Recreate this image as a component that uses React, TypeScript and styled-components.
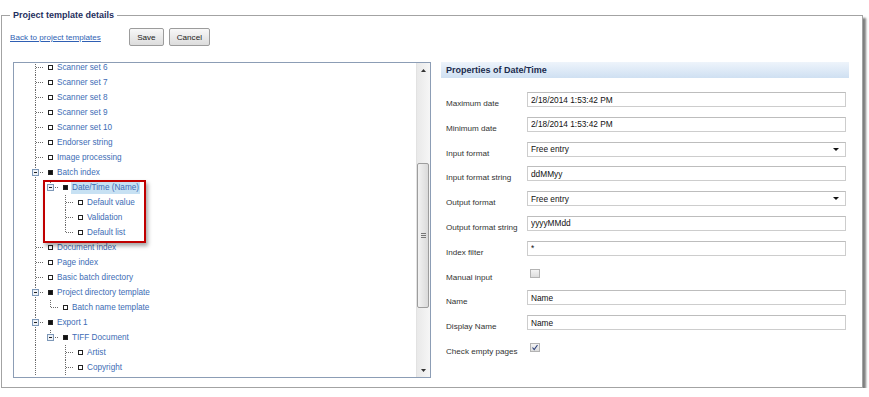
import { Fragment } from "react";
import styled, { createGlobalStyle } from "styled-components";

const GlobalStyle = createGlobalStyle`
  html, body {
    margin: 0;
    padding: 0;
    background: #fff;
  }
  body {
    font-family: "Liberation Sans", Arial, sans-serif;
    font-size: 8.1px;
    color: #333;
  }
`;

const Frame = styled.fieldset`
  box-sizing: border-box;
  width: 862px;
  margin: 9px 0 0 1px;
  padding: 7px 0 9px 8px;
  border: 1px solid #a3a3a3;
  box-shadow: 3px 3px 2px rgba(0, 0, 0, 0.5);
  min-width: 0;
`;

const Legend = styled.legend`
  padding: 0 3px;
  font-size: 9px;
  line-height: 12px;
  font-weight: bold;
  color: #1f2f5e;
`;

const Toolbar = styled.div`
  display: flex;
  align-items: center;
  height: 18px;
`;

const BackLink = styled.a`
  color: #2f5fb3;
  text-decoration: underline;
  font-size: 8.1px;
  margin-right: 28px;
  cursor: pointer;
`;

const Button = styled.button<{ $w: number }>`
  box-sizing: border-box;
  width: ${(p) => p.$w}px;
  height: 18px;
  padding: 0;
  margin-right: 5px;
  font-family: "Liberation Sans", Arial, sans-serif;
  font-size: 8.1px;
  color: #222;
  border: 1px solid #9c9c9c;
  border-radius: 2px;
  background: linear-gradient(#f8f8f8, #dcdcdc);
`;

const Panels = styled.div`
  display: flex;
  align-items: flex-start;
  margin: 16px 0 0 3px;
`;

const TreeBox = styled.div`
  position: relative;
  box-sizing: border-box;
  width: 418px;
  height: 316px;
  border: 1px solid #8c9db5;
  display: flex;
`;

const TreeScroll = styled.div`
  flex: 1;
  overflow: hidden;
  padding-left: 14px;
`;

const TreeList = styled.div`
  margin-top: -3px;
`;

const Row = styled.div`
  display: flex;
  align-items: center;
  height: 15px;
`;

const NodeIcon = styled.span<{ $filled: boolean }>`
  box-sizing: border-box;
  width: 5px;
  height: 5px;
  margin: 0 4px 0 5px;
  border: 1px solid #222;
  background: ${(p) => (p.$filled ? "#111" : "#fff")};
`;

const NodeText = styled.span<{ $selected?: boolean }>`
  color: #3d6cb5;
  font-size: 8.2px;
  line-height: 13px;
  white-space: nowrap;
  padding: 0 1px;
  margin-left: -1px;
  background: ${(p) => (p.$selected ? "#c7e1f3" : "transparent")};
`;

const Callout = styled.div`
  position: absolute;
  left: 29px;
  top: 117px;
  width: 103px;
  height: 63px;
  box-sizing: border-box;
  border: 2px solid #c00000;
  box-shadow: 2px 3px 4px rgba(0, 0, 0, 0.35);
  pointer-events: none;
`;

const Scrollbar = styled.div`
  width: 13px;
  display: flex;
  flex-direction: column;
  background: linear-gradient(90deg, #e9e9e9, #f6f6f6);
  border-left: 1px solid #e2e2e2;
`;

const ArrowButton = styled.div`
  height: 14px;
  display: flex;
  align-items: center;
  justify-content: center;
`;

const Track = styled.div<{ $h?: number }>`
  height: ${(p) => (p.$h ? `${p.$h}px` : "auto")};
  flex: ${(p) => (p.$h ? "none" : "1")};
`;

const Thumb = styled.div`
  box-sizing: border-box;
  height: 145px;
  margin: 0 1px 0 0;
  border: 1px solid #9d9d9d;
  border-radius: 2px;
  background: linear-gradient(90deg, #f2f2f2, #dadada);
  display: flex;
  align-items: center;
  justify-content: center;
`;

const Grip = styled.div`
  width: 5px;
  height: 5px;
  background: repeating-linear-gradient(#777 0 1px, transparent 1px 2px);
`;

const PropsPanel = styled.div`
  width: 408px;
  margin-left: 10px;
`;

const PanelHeader = styled.div`
  height: 16px;
  line-height: 16px;
  padding-left: 5px;
  font-size: 9px;
  font-weight: bold;
  color: #1b2b4d;
  background: linear-gradient(#eef4fb, #cfe0f2);
`;

const Form = styled.div`
  display: grid;
  grid-template-columns: 81px 319px;
  grid-auto-rows: 15px;
  row-gap: 9.8px;
  margin-top: 14px;
  padding-left: 5px;
`;

const Label = styled.span`
  padding-top: 7px;
  line-height: 10px;
  font-size: 8.1px;
  color: #333;
  white-space: nowrap;
`;

const TextInput = styled.input`
  box-sizing: border-box;
  width: 100%;
  height: 15px;
  margin: 0;
  padding: 0 3px;
  font-family: "Liberation Sans", Arial, sans-serif;
  font-size: 8.3px;
  color: #111;
  background: #fff;
  border: 1px solid #cdcdcd;
  border-top-color: #bdbdbd;
  outline: none;
`;

const SelectBox = styled.div`
  box-sizing: border-box;
  height: 15px;
  padding: 0 3px;
  display: flex;
  align-items: center;
  justify-content: space-between;
  font-size: 8.3px;
  color: #111;
  border: 1px solid #cdcdcd;
  border-top-color: #bdbdbd;
  background: #fff;
`;

const Caret = styled.span`
  width: 0;
  height: 0;
  margin-right: 3px;
  border-left: 3px solid transparent;
  border-right: 3px solid transparent;
  border-top: 3px solid #111;
`;

const CheckCell = styled.div`
  display: flex;
  align-items: center;
  padding-left: 3px;
`;

const CheckBox = styled.span`
  box-sizing: border-box;
  width: 10px;
  height: 9px;
  border: 1px solid #b3b3b3;
  background: linear-gradient(#f3f3f3, #dcdcdc);
  display: flex;
  align-items: center;
  justify-content: center;
`;

type Guide = "pipe" | "blank" | "tee" | "elbow";

type TreeNode = {
  label: string;
  guides: Guide[];
  conn: Guide;
  filled?: boolean;
  expand?: boolean;
  selected?: boolean;
};

const tree: TreeNode[] = [
  { label: "Scanner set 6", guides: [], conn: "tee" },
  { label: "Scanner set 7", guides: [], conn: "tee" },
  { label: "Scanner set 8", guides: [], conn: "tee" },
  { label: "Scanner set 9", guides: [], conn: "tee" },
  { label: "Scanner set 10", guides: [], conn: "tee" },
  { label: "Endorser string", guides: [], conn: "tee" },
  { label: "Image processing", guides: [], conn: "tee" },
  { label: "Batch index", guides: [], conn: "tee", filled: true, expand: true },
  { label: "Date/Time (Name)", guides: ["pipe"], conn: "elbow", filled: true, expand: true, selected: true },
  { label: "Default value", guides: ["pipe", "blank"], conn: "tee" },
  { label: "Validation", guides: ["pipe", "blank"], conn: "tee" },
  { label: "Default list", guides: ["pipe", "blank"], conn: "elbow" },
  { label: "Document index", guides: [], conn: "tee" },
  { label: "Page index", guides: [], conn: "tee" },
  { label: "Basic batch directory", guides: [], conn: "tee" },
  { label: "Project directory template", guides: [], conn: "tee", filled: true, expand: true },
  { label: "Batch name template", guides: ["pipe"], conn: "elbow" },
  { label: "Export 1", guides: [], conn: "tee", filled: true, expand: true },
  { label: "TIFF Document", guides: ["pipe"], conn: "elbow", filled: true, expand: true },
  { label: "Artist", guides: ["pipe", "blank"], conn: "tee" },
  { label: "Copyright", guides: ["pipe", "blank"], conn: "tee" },
];

function GuideCell({ kind, expand }: { kind: Guide; expand?: boolean }) {
  const dot = { stroke: "#6a6a6a", strokeWidth: 1, strokeDasharray: "1 1" };
  return (
    <svg width="15" height="15" viewBox="0 0 15 15" shapeRendering="crispEdges">
      {(kind === "pipe" || kind === "tee") && <line x1="7.5" y1="0" x2="7.5" y2="15" {...dot} />}
      {kind === "elbow" && <line x1="7.5" y1="0" x2="7.5" y2="7.5" {...dot} />}
      {(kind === "tee" || kind === "elbow") && <line x1="8" y1="7.5" x2="15" y2="7.5" {...dot} />}
      {expand && (
        <g>
          <rect x="4.5" y="4.5" width="6" height="6" fill="#eef2f8" stroke="#7d98b8" />
          <line x1="6" y1="7.5" x2="9" y2="7.5" stroke="#222" />
        </g>
      )}
    </svg>
  );
}

const fields: { label: string; kind: "text" | "select" | "check"; value?: string; checked?: boolean }[] = [
  { label: "Maximum date", kind: "text", value: "2/18/2014 1:53:42 PM" },
  { label: "Minimum date", kind: "text", value: "2/18/2014 1:53:42 PM" },
  { label: "Input format", kind: "select", value: "Free entry" },
  { label: "Input format string", kind: "text", value: "ddMMyy" },
  { label: "Output format", kind: "select", value: "Free entry" },
  { label: "Output format string", kind: "text", value: "yyyyMMdd" },
  { label: "Index filter", kind: "text", value: "*" },
  { label: "Manual input", kind: "check", checked: false },
  { label: "Name", kind: "text", value: "Name" },
  { label: "Display Name", kind: "text", value: "Name" },
  { label: "Check empty pages", kind: "check", checked: true },
];

export default function App() {
  return (
    <>
      <GlobalStyle />
      <Frame>
        <Legend>Project template details</Legend>
        <Toolbar>
          <BackLink>Back to project templates</BackLink>
          <Button $w={35}>Save</Button>
          <Button $w={41}>Cancel</Button>
        </Toolbar>
        <Panels>
          <TreeBox>
            <TreeScroll>
              <TreeList>
                {tree.map((n) => (
                  <Row key={n.label}>
                    {n.guides.map((g, i) => (
                      <GuideCell key={i} kind={g} />
                    ))}
                    <GuideCell kind={n.conn} expand={n.expand} />
                    <NodeIcon $filled={!!n.filled} />
                    <NodeText $selected={n.selected}>{n.label}</NodeText>
                  </Row>
                ))}
              </TreeList>
            </TreeScroll>
            <Scrollbar>
              <ArrowButton>
                <svg width="5" height="3" viewBox="0 0 5 3">
                  <path d="M0 3 L2.5 0 L5 3 Z" fill="#333" />
                </svg>
              </ArrowButton>
              <Track $h={86} />
              <Thumb>
                <Grip />
              </Thumb>
              <Track />
              <ArrowButton>
                <svg width="5" height="3" viewBox="0 0 5 3">
                  <path d="M0 0 L2.5 3 L5 0 Z" fill="#333" />
                </svg>
              </ArrowButton>
            </Scrollbar>
            <Callout />
          </TreeBox>
          <PropsPanel>
            <PanelHeader>Properties of Date/Time</PanelHeader>
            <Form>
              {fields.map((f) => (
                <Fragment key={f.label}>
                  <Label>{f.label}</Label>
                  {f.kind === "text" && <TextInput readOnly defaultValue={f.value} />}
                  {f.kind === "select" && (
                    <SelectBox>
                      <span>{f.value}</span>
                      <Caret />
                    </SelectBox>
                  )}
                  {f.kind === "check" && (
                    <CheckCell>
                      <CheckBox>
                        {f.checked && (
                          <svg width="8" height="7" viewBox="0 0 8 7">
                            <path d="M1.5 3.5 L3.2 5.5 L6.5 1" fill="none" stroke="#2b3f7a" strokeWidth="1.1" />
                          </svg>
                        )}
                      </CheckBox>
                    </CheckCell>
                  )}
                </Fragment>
              ))}
            </Form>
          </PropsPanel>
        </Panels>
      </Frame>
    </>
  );
}
